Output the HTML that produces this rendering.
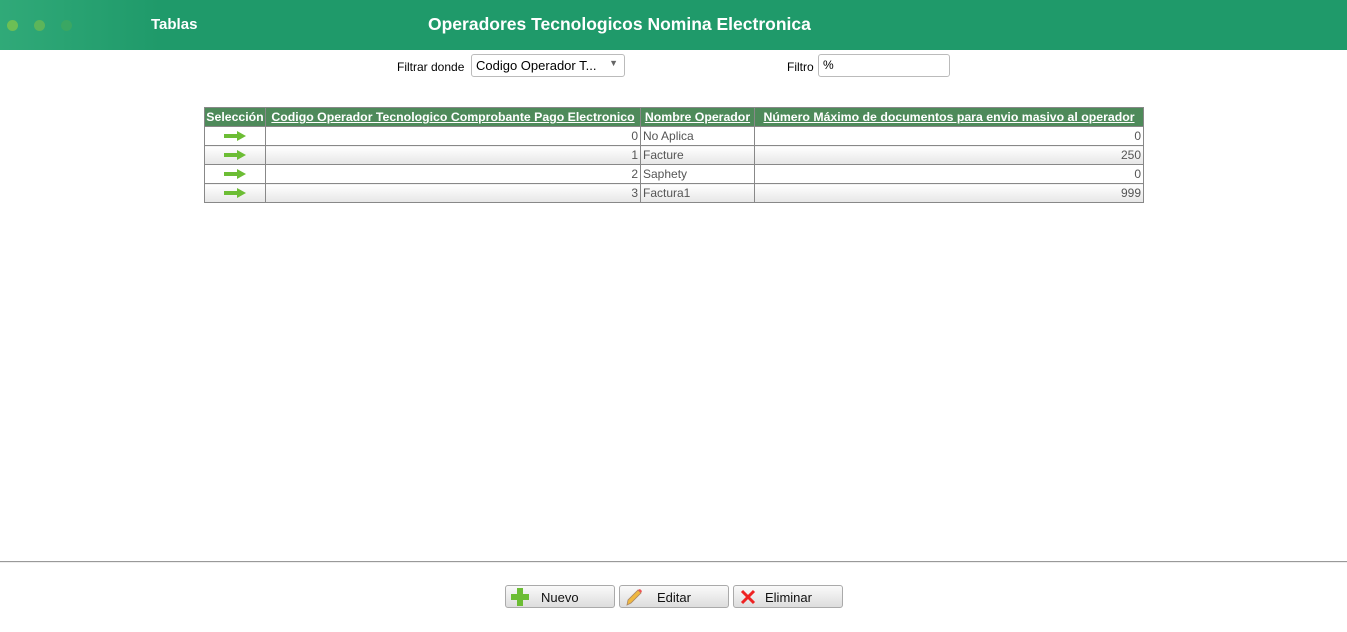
<!DOCTYPE html>
<html><head><meta charset="utf-8"><style>
*{margin:0;padding:0;box-sizing:border-box}
body{width:1347px;height:632px;background:#fff;font-family:"Liberation Sans",sans-serif;position:relative;overflow:hidden;font-size:12px}
.top{position:absolute;left:0;top:0;width:1347px;height:50px;background:#1f9a6a}
.glow{position:absolute;left:0;top:0;width:160px;height:50px;background:linear-gradient(90deg,rgba(60,180,130,.6),rgba(31,154,106,0))}
.dot{position:absolute;top:20px;width:11px;height:11px;border-radius:50%}
.t1{position:absolute;left:151px;top:16px;color:#fff;font-weight:bold;font-size:15px}
.t2{position:absolute;left:428px;top:14px;color:#fff;font-weight:bold;font-size:17.5px}
.lbl{position:absolute;font-size:12px;color:#000}
.box{position:absolute;border:1px solid #bbb;border-radius:3px;background:#fff;font-size:13px;padding:3px 4px;height:23px}
table{position:absolute;left:204px;top:107px;border-collapse:collapse;font-size:12px;table-layout:fixed;width:939px}
td,th{border:1px solid #888;height:19px;padding:0 2px;color:#555;overflow:hidden;white-space:nowrap}
th{background:#4e8a5a;color:#fff;font-weight:bold;text-decoration:underline;font-size:12.3px;padding:0 1px}
th:first-child{text-decoration:none}
tr.a td{background:linear-gradient(#fff,#e6e6e6)}
.r{text-align:right}
.arr{display:block;margin:0 auto;width:22px;height:10px}
.hr{position:absolute;left:0;top:561px;width:1347px;height:2px;background:#999;border-bottom:1px solid #eee}
.btn{position:absolute;top:585px;width:110px;height:23px;border:1px solid #aaa;border-radius:3px;background:linear-gradient(#fafafa,#ddd);font-size:13px;color:#111}
.btn span{position:absolute;top:4px}
.btn svg{position:absolute;left:5px;top:2px}
</style></head><body>
<div class="top"><div class="glow"></div>
<div class="dot" style="left:7px;background:#6cbf55"></div>
<div class="dot" style="left:34px;background:#5cb55a"></div>
<div class="dot" style="left:61px;background:#3aa763"></div>
<div class="t1">Tablas</div>
<div class="t2">Operadores Tecnologicos Nomina Electronica</div></div>
<div class="lbl" style="left:397px;top:60px">Filtrar donde</div>
<div class="box" style="left:471px;top:54px;width:154px">Codigo Operador T...<span style="position:absolute;right:6px;top:3px;font-size:9px;color:#666">▼</span></div>
<div class="lbl" style="left:787px;top:60px">Filtro</div>
<div class="box" style="left:818px;top:54px;width:132px;font-size:12px">%</div>
<table>
<colgroup><col style="width:61px"><col style="width:375px"><col style="width:114px"><col style="width:389px"></colgroup>
<tr><th>Selección</th><th>Codigo Operador Tecnologico Comprobante Pago Electronico</th><th>Nombre Operador</th><th>Número Máximo de documentos para envio masivo al operador</th></tr>
<tr><td><svg class="arr" viewBox="0 0 22 10"><path d="M0 3h13V0l9 5-9 5V7H0z" fill="#6cbd34"/></svg></td><td class="r">0</td><td>No Aplica</td><td class="r">0</td></tr>
<tr class="a"><td><svg class="arr" viewBox="0 0 22 10"><path d="M0 3h13V0l9 5-9 5V7H0z" fill="#6cbd34"/></svg></td><td class="r">1</td><td>Facture</td><td class="r">250</td></tr>
<tr><td><svg class="arr" viewBox="0 0 22 10"><path d="M0 3h13V0l9 5-9 5V7H0z" fill="#6cbd34"/></svg></td><td class="r">2</td><td>Saphety</td><td class="r">0</td></tr>
<tr class="a"><td><svg class="arr" viewBox="0 0 22 10"><path d="M0 3h13V0l9 5-9 5V7H0z" fill="#6cbd34"/></svg></td><td class="r">3</td><td>Factura1</td><td class="r">999</td></tr>
</table>
<div class="hr"></div>
<div class="btn" style="left:505px"><svg width="18" height="18" viewBox="0 0 18 18"><path d="M6 0h6v6h6v6h-6v6H6v-6H0V6h6z" fill="#6cbd34"/></svg><span style="left:35px">Nuevo</span></div>
<div class="btn" style="left:619px"><svg width="18" height="18" viewBox="0 0 18 18"><path d="M2 17l1-5L13 2l3 3L6 15z" fill="#f0b840" stroke="#a86" stroke-width=".8"/><path d="M13 2l2-1 2 2-1 2z" fill="#e55"/></svg><span style="left:37px">Editar</span></div>
<div class="btn" style="left:733px"><svg width="18" height="18" viewBox="0 0 18 18"><path d="M3 3l12 12M15 3L3 15" stroke="#e22" stroke-width="3"/></svg><span style="left:31px">Eliminar</span></div>
</body></html>
